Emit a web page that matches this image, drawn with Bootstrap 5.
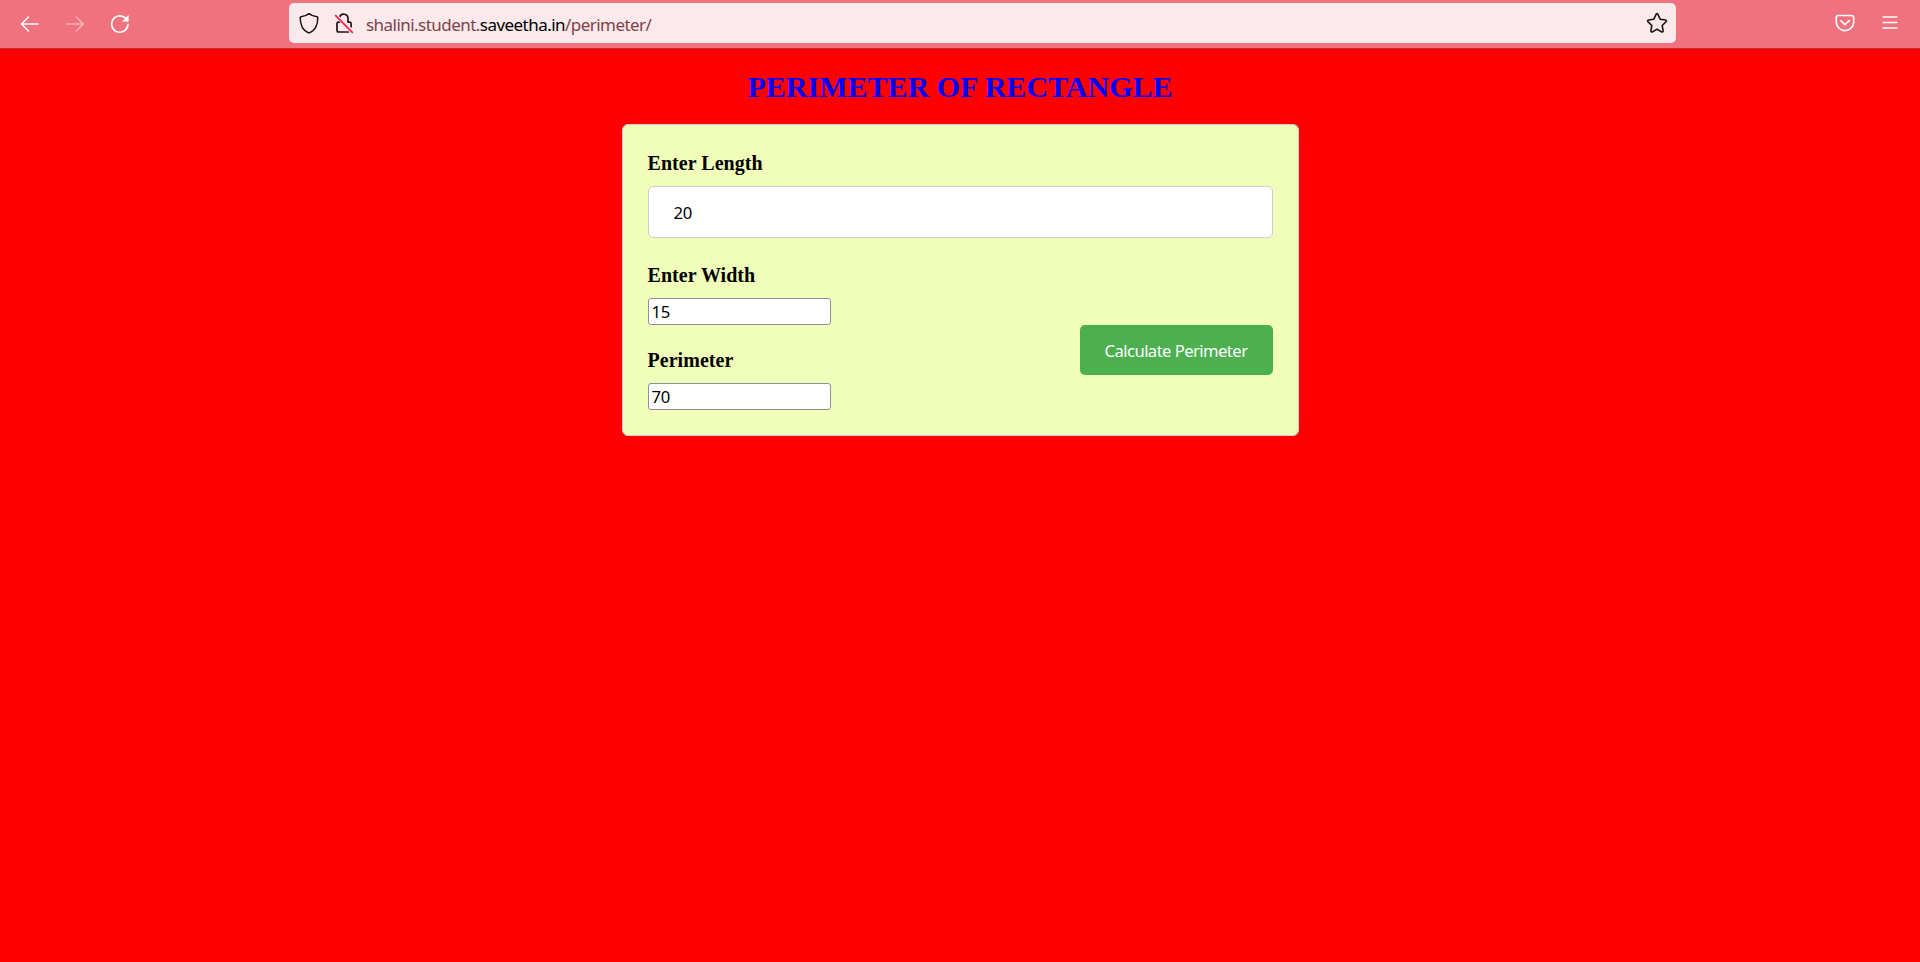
<!DOCTYPE html>
<html lang="en">
<head>
<meta charset="utf-8">
<title>Perimeter of Rectangle</title>
<link href="https://cdn.jsdelivr.net/npm/bootstrap@5.3.0/dist/css/bootstrap.min.css" rel="stylesheet">
<style>
body{background:#f00;color:#000;font-family:"Noto Sans",sans-serif}
.toolbar{height:49px;background:#f0727e;border-bottom:1px solid #c42d3a;padding:0 21px 0 19px}
.toolbar svg{display:block;fill:none;stroke-linecap:round;stroke-linejoin:round;flex:none}
.nav-tools{width:270px;gap:25px}
.menu-tools{height:46px;gap:26px}
.address{width:1387px;height:40px;margin-top:3px;background:#fbe9eb;border-radius:5px;padding:0 8px 0 9px}
.url{font-size:17px;line-height:24px;letter-spacing:-.54px;color:#7d434a;margin-left:12px;padding-top:3px;white-space:nowrap}
.url b{font-weight:400;color:#000}
.lock{margin-left:14px}
.page-title{font:bold 30px/34px "Liberation Serif",serif;color:#00f;margin:21px 0 20px}
.panel{width:677px;height:312px;background:#f0feba;border:1px solid #ccc;border-radius:6px;padding:25px}
.panel label{display:block;font:bold 20px/27px "Liberation Serif",serif;letter-spacing:.04px;margin-bottom:9px}
.panel input{display:block;font-size:16.67px;letter-spacing:-.3px;color:#000;background:#fff;outline:0}
.wide{width:100%;height:52px;border:1px solid #ccc;border-radius:5px;padding:0 25px}
.slim{width:183px;height:27px;border:1px solid #8f8f9d;border-radius:3px;padding:0 3px}
.slim + label{margin-top:22px}
.calc{width:193px;height:50px;background:#4caf50;color:#fff;border:0;border-radius:5px;font-size:16.67px;letter-spacing:-.57px;margin-bottom:35px;padding:0;white-space:nowrap}
</style>
</head>
<body>
<header class="toolbar d-flex align-items-start">
  <div class="nav-tools d-flex align-items-center h-100 flex-shrink-0">
    <svg width="20" height="20" viewBox="0 0 20 20" stroke="#fff" stroke-width="1.5"><path d="M19.2 10H2.5M9.5 3l-7 7 7 7"/></svg>
    <svg width="20" height="20" viewBox="0 0 20 20" stroke="#f8b2b8" stroke-width="1.5"><path d="M2.5 10h16.7M12.2 3l7 7-7 7"/></svg>
    <svg width="20" height="20" viewBox="0 0 20 20" stroke="#fff" stroke-width="1.6"><path d="M19 10.4a8.2 8.2 0 1 1-3-6.7l2 1.6"/><path d="M19.2 2v5.2H14z" fill="#fff" stroke-width=".8"/></svg>
  </div>
  <div class="address d-flex align-items-center flex-shrink-0">
    <svg width="22" height="22" viewBox="0 0 22 22" stroke="#1b1517" stroke-width="1.5"><path d="M11 1.7c-2.5 2-5.2 2.8-8 3.1-.5.1-.8.4-.8.9.1 6.800 2.300 12.300 7.700 14.800.7.3 1.500.3 2.200 0 5.400-2.500 7.600-8 7.700-14.800 0-.5-.3-.8-.8-.9-2.800-.3-5.500-1.100-8-3.100z"/></svg>
    <svg class="lock" width="20" height="22" viewBox="0 0 20 22" stroke="#1b1517" stroke-width="1.7"><path d="M5.700 4.900a4.300 4.300 0 0 1 8.300 1.500v3.700h1.500q1.600 0 1.600 1.600v3M14.500 20H4.700q-1.700 0-1.700-1.700v-6.600q0-1.600 1.700-1.600h1.600"/><path d="M2 3.600l16.300 16.600" stroke="#fbe9eb" stroke-width="3.600"/><path d="M1.700 3.600l16.600 16.700" stroke="#ff1c48" stroke-width="1.700"/></svg>
    <span class="url">shalini.student.<b>saveetha.in</b>/perimeter/</span>
    <svg class="ms-auto" width="22" height="22" viewBox="0 0 22 22" stroke="#1b1517" stroke-width="1.6"><path d="M10.100 2.300q.9-1.400 1.800 0l2.300 4.900 5.300.8q1.500.4.600 1.600l-3.900 3.900.9 5.400q0 1.500-1.500 1L11 17.300l-4.600 2.600q-1.500.5-1.500-1l.9-5.400-3.900-3.900Q1 8.400 2.500 8l5.300-.8z"/></svg>
  </div>
  <div class="menu-tools d-flex align-items-center ms-auto">
    <svg width="20" height="20" viewBox="0 0 20 20" stroke="#fff" stroke-width="1.6"><path d="M3.500 2.500h13q2.200 0 2.200 2.200v4.200a8.700 8.700 0 0 1-17.400 0V4.700q0-2.200 2.200-2.200zM5.800 7.700l4.200 4 4.200-4"/></svg>
    <svg width="18" height="18" viewBox="0 0 18 18" stroke="#fff" stroke-width="1.3"><path d="M2 3h14M2 8.500h14M2 14h14"/></svg>
  </div>
</header>
<main class="d-flex flex-column align-items-center">
  <h1 class="page-title">PERIMETER OF RECTANGLE</h1>
  <form class="panel d-flex flex-column">
    <label for="len">Enter Length</label>
    <input id="len" class="wide" value="20">
    <div class="d-flex justify-content-between align-items-end flex-grow-1">
      <div>
        <label for="wid">Enter Width</label>
        <input id="wid" class="slim" value="15">
        <label for="per">Perimeter</label>
        <input id="per" class="slim" value="70">
      </div>
      <button type="button" class="calc">Calculate Perimeter</button>
    </div>
  </form>
</main>
<script src="https://cdn.jsdelivr.net/npm/bootstrap@5.3.0/dist/js/bootstrap.bundle.min.js"></script>
</body>
</html>
